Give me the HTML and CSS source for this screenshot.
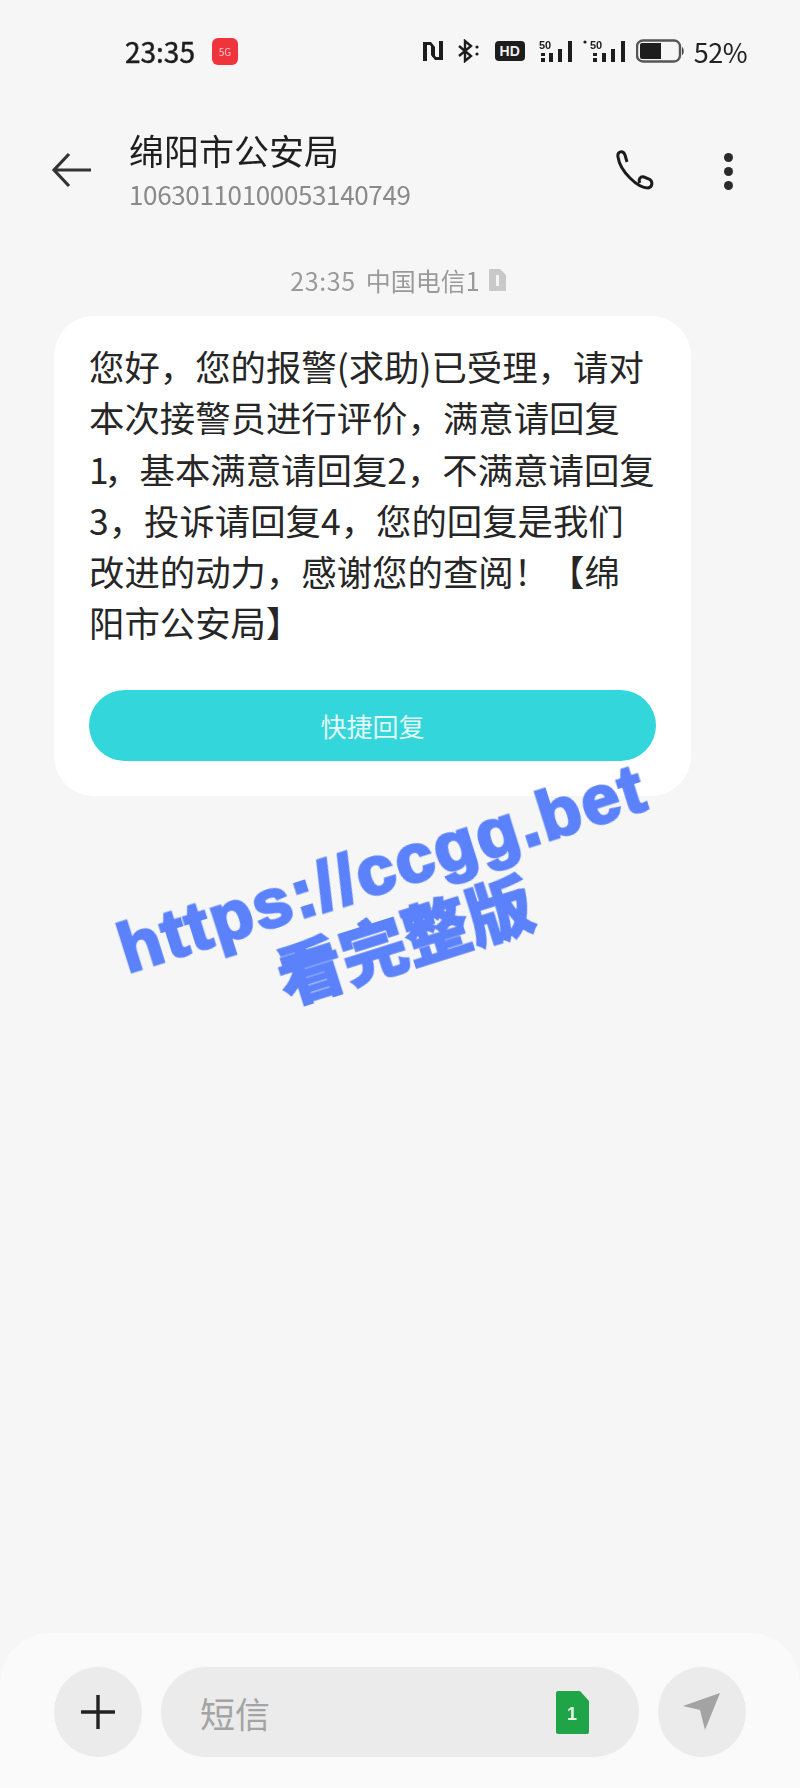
FILE: index.html
```html
<!DOCTYPE html>
<html lang="zh-CN">
<head>
    <meta charset="UTF-8">
    <meta name="viewport" content="width=device-width, initial-scale=1.0">
    <title>绵阳市公安局</title>
    <link rel="stylesheet" href="styles.css">
</head>
<body>
    <div class="page">
        <div class="status-bar">
            <div class="status-left">
                <span class="clock">23:35</span>
                <span class="app-badge">5G</span>
            </div>
            <div class="status-right">
                <svg class="st-nfc" width="22" height="22" viewBox="0 0 22 22"><path d="M1 21V2h8l4 5v10h-3V8L8 5H5v16zM21 1v19h-8l-4-5V6h3v8l2 3h3V1z" fill="#1d1d1d"/></svg>
                <svg class="st-bt" width="24" height="24" viewBox="0 0 24 24" fill="none" stroke="#1d1d1d" stroke-width="2.4"><path d="M2 7l12 10-6 5V2l6 5L2 17"/><circle cx="20" cy="8" r="1.6" fill="#1d1d1d" stroke="none"/><circle cx="20" cy="15" r="1.6" fill="#1d1d1d" stroke="none"/></svg>
                <span class="st-hd">HD</span>
                <svg class="st-signal" width="35" height="24" viewBox="0 0 35 24"><g fill="#1d1d1d"><rect x="2" y="14" width="4" height="3"/><rect x="2" y="19" width="4" height="4"/><rect x="10" y="14" width="4" height="9"/><rect x="19" y="10" width="4" height="13"/><rect x="29" y="2" width="4" height="21"/></g><text x="0" y="10" class="st-five">50</text></svg>
                <svg class="st-signal" width="44" height="24" viewBox="0 0 44 24"><g fill="#1d1d1d"><circle cx="2" cy="3" r="1.6"/><rect x="10" y="14" width="4" height="3"/><rect x="10" y="19" width="4" height="4"/><rect x="19" y="14" width="4" height="9"/><rect x="28" y="10" width="4" height="13"/><rect x="38" y="2" width="4" height="21"/></g><text x="7" y="10" class="st-five">50</text></svg>
                <svg class="st-batt" width="49" height="24" viewBox="0 0 49 24"><rect x="1" y="1.5" width="43" height="21" rx="6" fill="none" stroke="#555" stroke-width="2.400"/><path d="M4 6a2 2 0 0 1 2-2h19v16H6a2 2 0 0 1-2-2z" fill="#1d1d1d"/><path d="M46 8c2 1 2.500 7 0 8z" fill="#444"/></svg>
                <span class="pct">52%</span>
            </div>
        </div>

        <div class="header">
            <svg class="back" width="42" height="36" viewBox="0 0 42 36" fill="none" stroke="#333" stroke-width="3.2"><path d="M40 18H3M18 2L3 18l15 16"/></svg>
            <div class="contact">
                <div class="contact-name">绵阳市公安局</div>
                <div class="contact-num">10630110100053140749</div>
            </div>
            <svg class="phone" width="38" height="40" viewBox="0 0 38 40" fill="none" stroke="#1c1c1c" stroke-width="3"><path d="M11 12L9 5C7 0 1 1 2 7c1 7 6 15 12 21 5 5 12 10 18 10 5-1 5-7 1-9l-5-2c-4-1-6 3-4 6"/></svg>
            <div class="more">
                <span class="dot"></span>
                <span class="dot"></span>
                <span class="dot"></span>
            </div>
        </div>

        <div class="meta">
            <span class="meta-time">23:35</span>
            <span class="meta-sim">中国电信1</span>
            <svg width="19" height="24" viewBox="0 0 19 24"><path d="M1 1h11l6 6v16H1z" fill="#c9c9c9"/><rect x="8" y="7" width="3" height="11" fill="#f4f4f4"/></svg>
        </div>

        <div class="bubble">
            <p class="bubble-text">您好，您的报警(求助)已受理，请对<br>本次接警员进行评价，满意请回复<br><span class="narrow-one">1</span>，基本满意请回复2，不满意请回复<br>3，投诉请回复4，您的回复是我们<br>改进的动力，感谢您的查阅！【绵<br>阳市公安局】</p>
            <div class="quick-reply">快捷回复</div>
        </div>

        <div class="composer">
            <div class="round-btn">
                <svg width="34" height="36" viewBox="0 0 34 36" stroke="#222" stroke-width="3.4"><path d="M17 1v34M0 18h34"/></svg>
            </div>
            <div class="input-box">
                <span class="placeholder">短信</span>
                <svg class="sim" width="33" height="43" viewBox="0 0 33 43"><path d="M2 0h22l9 10v31a2 2 0 0 1-2 2H2a2 2 0 0 1-2-2V2a2 2 0 0 1 2-2z" fill="#1fa548"/><text x="16" y="29" class="sim-num">1</text></svg>
            </div>
            <div class="round-btn">
                <svg width="38" height="38" viewBox="0 0 38 38"><path d="M37 0L0 13l17 4 5 20z" fill="#a3a3a3"/></svg>
            </div>
        </div>
    </div>

    <div class="watermark">
        <div class="wm-url">https://ccgg.bet</div>
        <div class="wm-cn">看完整版</div>
    </div>
</body>
</html>
```

FILE: styles.css
```css
* {
    box-sizing: border-box;
}

body {
    margin: 0;
    background: #f6f6f6;
    font-family: "Noto Sans CJK SC", "Noto Sans", sans-serif;
    color: #222;
}

.page {
    display: flex;
    flex-direction: column;
    width: 800px;
    height: 1788px;
    filter: blur(0.6px);
}

.status-bar {
    display: flex;
    justify-content: space-between;
    align-items: center;
    height: 104px;
    padding: 0 53px 2px 125px;
}

.status-left {
    display: flex;
    align-items: center;
    gap: 17px;
}

.clock {
    font-size: 28px;
    color: #1d1d1d;
    -webkit-text-stroke: 0.5px #1d1d1d;
}

.app-badge {
    width: 26px;
    height: 27px;
    border-radius: 6px;
    background: #f0343c;
    color: #f7c9c9;
    font-size: 10px;
    line-height: 27px;
    text-align: center;
}

.status-right {
    display: flex;
    align-items: center;
    gap: 9px;
}

.st-bt {
    margin-left: 4px;
}

.st-hd {
    width: 30px;
    height: 20px;
    margin: 0 5px;
    border-radius: 4px;
    background: #1d1d1d;
    color: #eee;
    font-family: "Liberation Sans", sans-serif;
    font-size: 14px;
    font-weight: 700;
    line-height: 20px;
    text-align: center;
}

.st-five {
    font-family: "Liberation Sans", sans-serif;
    font-size: 11px;
    font-weight: 700;
    fill: #1d1d1d;
}

.pct {
    font-size: 27px;
    letter-spacing: -0.5px;
    color: #222;
}

.header {
    display: flex;
    align-items: flex-start;
    padding: 24px 0 0 51px;
    height: 114px;
}

.back {
    margin: 24px 0 0 0;
}

.contact {
    width: 487px;
    margin-left: 36px;
}

.contact-name {
    font-size: 35px;
    line-height: 44px;
    color: #1f1f1f;
}

.contact-num {
    font-size: 26px;
    line-height: 44px;
    letter-spacing: -0.35px;
    color: #8a8a8a;
}

.phone {
    margin: 22px 0 0 0;
}

.more {
    display: flex;
    flex-direction: column;
    gap: 5px;
    margin: 25px 0 0 70px;
}

.dot {
    width: 9px;
    height: 9px;
    border-radius: 50%;
    background: #2b2b2b;
}

.meta {
    display: flex;
    justify-content: center;
    align-items: center;
    height: 34px;
    margin-top: 45px;
    padding-right: 3px;
    font-size: 25px;
    color: #9a9a9a;
}

.meta-time {
    margin-right: 10px;
    letter-spacing: 0.6px;
}

.meta-sim {
    margin-right: 8px;
}

.bubble {
    width: 637px;
    margin: 19px 0 0 54px;
    padding: 24px 35px 35px;
    border-radius: 40px;
    background: #fff;
}

.bubble-text {
    margin: 0;
    font-size: 35.4px;
    line-height: 51.3px;
    white-space: nowrap;
    color: #262626;
}

.narrow-one {
    letter-spacing: -4.5px;
}

.quick-reply {
    height: 71px;
    margin-top: 42px;
    border-radius: 36px;
    background: #33d6da;
    color: #e4f8f6;
    font-size: 26px;
    line-height: 71px;
    text-align: center;
}

.composer {
    display: flex;
    align-items: flex-start;
    gap: 19px;
    height: 155px;
    margin-top: auto;
    padding: 34px 54px 0;
    border-radius: 50px 50px 0 0;
    background: #fafafa;
}

.round-btn {
    display: flex;
    justify-content: center;
    align-items: center;
    flex: none;
    width: 88px;
    height: 90px;
    border-radius: 50%;
    background: #ebebeb;
}

.input-box {
    display: flex;
    justify-content: space-between;
    align-items: center;
    flex: 1;
    height: 90px;
    padding: 0 50px 0 39px;
    border-radius: 45px;
    background: #ebebeb;
}

.placeholder {
    font-size: 35px;
    color: #a4a4a4;
}

.sim-num {
    font-family: "Liberation Sans", sans-serif;
    font-size: 18px;
    font-weight: 700;
    text-anchor: middle;
    fill: #e8f5e8;
}

.watermark {
    position: absolute;
    left: 83px;
    top: 831px;
    width: 620px;
    text-align: center;
    transform: rotate(-17.5deg);
    color: #5b82fb;
    font-weight: 900;
}

.wm-url {
    font-family: "Liberation Sans", sans-serif;
    font-size: 69px;
    line-height: 72px;
    letter-spacing: 2.2px;
    -webkit-text-stroke: 3px #5b82fb;
}

.wm-cn {
    font-size: 66px;
    line-height: 71px;
    -webkit-text-stroke: 1.5px #5b82fb;
}
```
